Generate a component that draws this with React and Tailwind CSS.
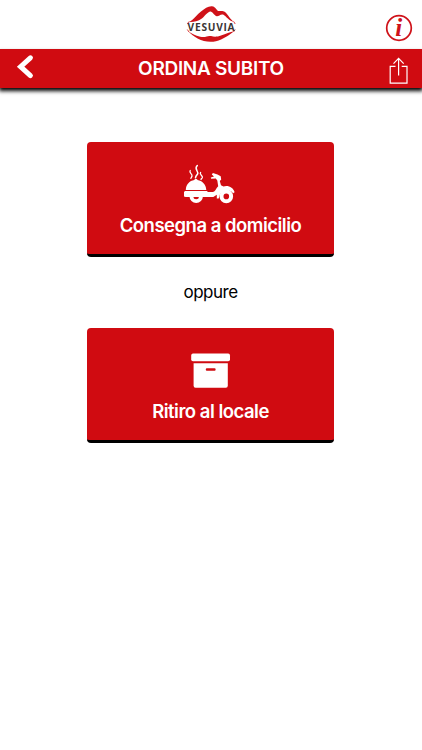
const VesuviaLogo = () => (
  <svg width="50" height="38" viewBox="186 5 50 38" aria-label="Vesuvia">
    {/* Mountain */}
    <path
      d="M188.5 22.3 C194 19.8 197 14.5 201 11.5 C205 8.5 208 6 212 6.3 C215 6.5 216 9.5 218 11 C220 11.5 222 10 225 12 C228 14.5 230 19.5 234.5 22.3 C229 21 226 16.2 223.5 14.8 C221 13.6 219 16.2 217 16.3 C214 15.5 212.5 11 210 11.5 C206 13 204 18 199 20.3 C195 21.8 192 22 188.5 22.3Z"
      fill="#cf1219"
    />
    {/* Lower lip */}
    <path
      d="M188 31.2 C196 35.8 200 37.3 205 36.9 C208 36.4 209 35.8 211 36 C214 37 217 37 221 35.5 C226 33.6 230 32.2 234 31.2 C229 35 223 39.5 216 41.2 C210 42.5 203 41.5 198 38.8 C194 36.5 191 34 188 31.2Z"
      fill="#cf1219"
    />
    <path d="M189 21.5 L187.3 24 M187.3 29.5 L189 32 M233.7 21.5 L235.2 24 M235.2 29.5 L233.5 32" stroke="#cf1219" strokeWidth="0.8" />
    <text
      x="187.6"
      y="30.6"
      textLength="47"
      className="fill-[#3b3535] font-['Open_Sans',sans-serif] text-[10.2px] font-bold"
    >
      VESUVIA
    </text>
  </svg>
);

const InfoIcon = () => (
  <svg width="28" height="28" viewBox="384.5 14 28 28">
    <circle cx="398.5" cy="28" r="12.3" fill="none" stroke="#cf1219" strokeWidth="1.7" />
    <text
      x="398.2"
      y="36"
      textAnchor="middle"
      className="fill-[#cf1219] font-['Liberation_Serif',serif] text-[25px] font-bold italic"
    >
      i
    </text>
  </svg>
);

const ShareIcon = () => (
  <svg width="20" height="28" viewBox="389 57 20 28" fill="none" stroke="#fff" strokeWidth="1.2">
    <path d="M395.5 66.3H390.2V83.2H407V66.3H401.7M398.6 75.5V58.6M393.5 63.7L398.6 58.4L403.7 63.7" />
  </svg>
);

const BackIcon = () => (
  <svg width="18" height="26" viewBox="16 54 18 26" fill="none" stroke="#fff" strokeWidth="5">
    <path d="M30.4 57.8L20.6 66.7L30.4 75.6" strokeLinecap="round" />
  </svg>
);

const ScooterIcon = () => (
  <svg width="54" height="42" viewBox="184 163 54 42" fill="#fff">
    {/* Steam */}
    <g fill="none" stroke="#fff" strokeWidth="1.3" strokeLinecap="round">
      <path d="M190.2 170.5C188.7 172.8 192.5 174 192 176C191.8 177 191.2 177.5 190.9 178.4" />
      <path d="M197.3 165.5C193.5 169 199 171 197.6 174C196.8 175.3 195.7 176 195.5 177.8" strokeWidth="1.5" />
      <path d="M200.6 172.5C199 174.5 202.8 175.5 202.4 177.4C202 178.5 201.3 178.6 201 179.5" />
    </g>
    {/* Dish */}
    <path d="M185.8 189.9C186.1 184.3 189.5 181 194.3 180.1C194 178.6 197.8 178.6 197.5 180.1C202.3 181 205.9 184.3 206.3 189.9Z" />
    {/* Rear wheel */}
    <path d="M189.5 196.6H202.9A6.7 6.4 0 0 1 189.5 196.6Z" />
    <path d="M193.5 197H198.8A2.6 2.2 0 0 1 193.5 197Z" fill="#d00b11" />
    {/* Body */}
    <path d="M185 190.9H206.8L208 192H212.5C216 191.3 215.6 188.5 218.2 186.2L217.3 180.5L215.8 178.5L211.2 178.8L210.8 177.6L214 176.4L211.8 174.6L212.9 173.1L217.5 174.4L220.7 176.2L221.2 179.5L219.8 181L221 185.2L223.5 186.6C228 184.9 233.4 187.6 234.6 192.3L233.1 193.2C229 188.5 222.2 189.8 219.8 194.8L218.7 198.4H216.8V194.7L213.3 197H185.8C183 197 182.3 195 183.1 193.2Z" />
    {/* Front wheel */}
    <circle cx="226.3" cy="196.4" r="4.8" fill="none" stroke="#fff" strokeWidth="4" />
  </svg>
);

const BoxIcon = () => (
  <svg width="40" height="36" viewBox="191 352 40 36" fill="#fff">
    <rect x="191.2" y="353.6" width="38.8" height="7.7" rx="1.8" />
    <path d="M193.6 363.2H227.8V385.8Q227.8 387.7 225.9 387.7H195.5Q193.6 387.7 193.6 385.8Z" />
    <rect x="205.8" y="368.2" width="9.8" height="2.5" rx="1" fill="#d00b11" />
  </svg>
);

const OrderButton = ({ icon, label }) => (
  <button className="flex h-[115px] w-[247px] flex-col items-center rounded border-b-[3px] border-black bg-[#d00b11] pt-[21px] text-white">
    <span className="flex h-[42px] items-center">{icon}</span>
    <span className="mt-2 whitespace-nowrap text-[18.5px] leading-6 font-semibold tracking-[-0.5px]">{label}</span>
  </button>
);

export default function App() {
  return (
    <div className="h-[750px] w-[422px] overflow-hidden bg-white font-['Inter',sans-serif]">
      {/* Top bar */}
      <header className="grid h-[49px] grid-cols-[1fr_50px_1fr] items-start pt-[5px]">
        <span />
        <VesuviaLogo />
        <button className="mt-[9px] mr-[9px] justify-self-end">
          <InfoIcon />
        </button>
      </header>

      {/* Title bar */}
      <nav className="mr-px -ml-px grid h-[39px] w-[424px] grid-cols-[60px_1fr_60px] items-center bg-[#d00b11] text-white shadow-[0_3px_4px_0_#000]">
        <button className="mb-[3px] ml-[17px] justify-self-start">
          <BackIcon />
        </button>
        <h1 className="text-center text-[19px] leading-6 font-semibold tracking-[-0.3px]">ORDINA SUBITO</h1>
        <button className="mt-1 mr-[14px] justify-self-end">
          <ShareIcon />
        </button>
      </nav>

      {/* Order options */}
      <main className="mr-px flex flex-col items-center pt-[54px]">
        <OrderButton icon={<ScooterIcon />} label="Consegna a domicilio" />
        <p className="my-[23px] text-[17px] leading-[25px] tracking-[-0.5px] text-black">oppure</p>
        <OrderButton icon={<BoxIcon />} label="Ritiro al locale" />
      </main>
    </div>
  );
}
